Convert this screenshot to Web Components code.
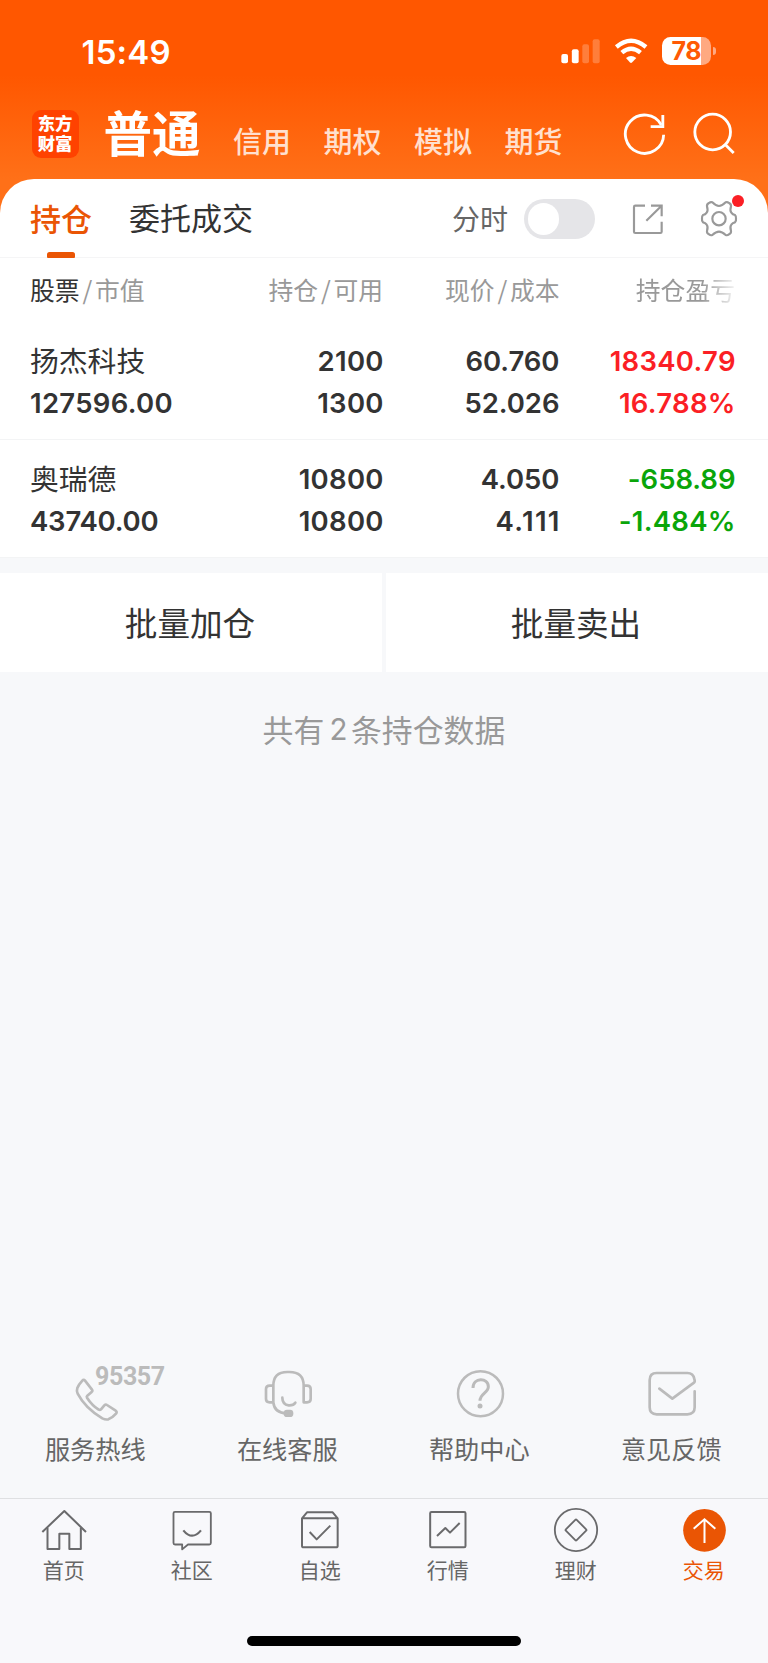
<!DOCTYPE html>
<html lang="zh-CN">
<head>
<meta charset="utf-8">
<title>持仓</title>
<style>
html, body { margin: 0; padding: 0; }
body { width: 768px; height: 1663px; overflow: hidden; background: #f7f8fa; font-family: Inter, "Noto Sans CJK SC", sans-serif; }
</style>
</head>
<body>
<trade-app></trade-app>
<script>
const CJK = '"Noto Sans CJK SC", sans-serif';

function define(name, render) {
  customElements.define(name, class extends HTMLElement {
    constructor() {
      super();
      this.attachShadow({ mode: 'open' });
    }
    connectedCallback() {
      const t = document.createElement('template');
      t.innerHTML = render(this);
      this.shadowRoot.replaceChildren(t.content.cloneNode(true));
    }
  });
}

/* name: [viewBox, width, height, markup] */
const ICONS = {
  signal: ['532 116 118 75', 39.33, 25, '<g fill="#fff"><rect x="533" y="161" width="20" height="28" rx="6"/><rect x="564.500" y="147" width="20.500" height="42" rx="6"/><g opacity=".23"><rect x="596" y="132" width="20" height="57" rx="6"/><rect x="627" y="117" width="21" height="72" rx="6"/></g></g>'],
  wifi: ['690 114 102 77', 34, 25.67, '<g fill="none" stroke="#fff" stroke-width="13"><path d="M697 141Q741 104 786 141"/><path d="M713.500 158Q741 134 769.500 158"/></g><path fill="#fff" d="M726 174Q741 162 757 174L744 187.500Q741 190 738 187.500Z"/>'],
  refresh: ['716 336 130 132', 43.33, 44, '<g fill="none" stroke="#fff" stroke-width="8.500"><path d="M838 404A57.500 57.500 0 1 1 831 375"/><path d="M835.500 345V380H799"/></g>'],
  search: ['922 336 132 132', 44, 44, '<g fill="none" stroke="#fff" stroke-width="8.500"><circle cx="984" cy="396" r="53.500"/><path d="M1020 432L1047 459"/></g>'],
  share: ['744 608 96 96', 32, 32, '<g fill="none" stroke="#999" stroke-width="6.500"><path d="M783 616H754Q750 616 750 620V694Q750 698 754 698H829Q833 698 833 694V664"/><path d="M801 616H833V648M832 617L787 661"/></g>'],
  gear: ['944 598 120 120', 40, 40, '<g fill="none" stroke="#999" stroke-width="6.500" stroke-linejoin="round"><circle cx="1004" cy="657" r="20"/><path d="M974 610Q979 606 984 608Q995 619 1004 619Q1013 619 1024 608Q1029 606 1034 610Q1041 613 1040 620Q1036 633 1041 639Q1045 645 1052 646Q1056 650 1055 657Q1056 664 1052 668Q1045 669 1041 675Q1036 681 1040 694Q1041 701 1034 704Q1029 708 1024 706Q1013 696 1004 696Q995 696 984 706Q979 708 974 704Q967 701 968 694Q972 681 967 675Q963 669 956 668Q952 664 953 657Q952 650 956 646Q963 645 967 639Q972 633 968 620Q967 613 974 610Z"/></g>'],
  phone: ['198 40 180 180', 60, 60, '<path fill="none" stroke="#bbb" stroke-width="8" stroke-linejoin="round" d="M247 93Q251 88 255 93L276 120Q279 124 275 127L262 138Q259 141 261 144Q276 167 296 180Q300 182 303 179L313 167Q317 163 321 166L347 183Q352 187 348 192Q337 205 325 209Q317 211 307 206Q256 176 233 132Q229 124 232 115Q236 105 247 93Z"/>'],
  headset: ['774 40 180 180', 60, 60, '<g fill="none" stroke="#bbb" stroke-width="8" stroke-linejoin="round"><path d="M820 158V108Q820 67 862 67H868Q911 67 911 108V158H921Q932 158 932 148V118Q932 108 921 108H911M820 108H809Q798 108 798 118V148Q798 158 809 158H820Q823 190 860 191"/><path stroke-linecap="round" d="M847 144Q847 164 866 167Q880 168 886 159"/></g><rect x="851" y="180" width="29" height="22" rx="10" fill="#bbb"/>'],
  help: ['198 40 180 180', 60, 60, '<circle cx="289.500" cy="132" r="67.500" fill="none" stroke="#bbb" stroke-width="7.500"/><path fill="none" stroke="#bbb" stroke-width="9" d="M267 115C267 82 313 83 313 111C313 129 288 132 288 153"/><circle cx="288" cy="169" r="7.500" fill="#bbb"/>'],
  feedback: ['774 40 180 180', 60, 60, '<path fill="none" stroke="#bbb" stroke-width="8" stroke-linecap="round" stroke-linejoin="round" d="M826 117L865 147L930 99Q934 96 931 88Q928 70 910 70H818Q797 70 797 91V173Q797 194 818 194H910Q932 194 932 173V125"/>'],
  home: ['120 468 144 144', 48, 48, '<g fill="none" stroke="#6a6a6c" stroke-width="6" stroke-linejoin="round"><path d="M127 546L193 483L258 546"/><path d="M142.500 533V597H178V551H208V597H242.500V533"/></g>'],
  community: ['504 468 144 144', 48, 48, '<g fill="none" stroke="#6a6a6c" stroke-width="5.500" stroke-linejoin="round"><path d="M525 485.500H628Q632.500 485.500 632.500 490V579Q632.500 583.500 628 583.500H564L546.500 598V583.500H525Q520.500 583.500 520.500 579V490Q520.500 485.500 525 485.500Z"/><path stroke-width="6.500" d="M550 541Q576 573 603 541"/></g>'],
  watch: ['888 468 144 144', 48, 48, '<g fill="none" stroke="#6a6a6c" stroke-width="6" stroke-linejoin="round"><path d="M906 505L921 487H998L1013 505V588Q1013 592 1008 592H911Q906 592 906 588ZM906 505H1013"/><path d="M929 546L950 568L991 527"/></g>'],
  market: ['120 468 144 144', 48, 48, '<g fill="none" stroke="#6a6a6c" stroke-width="6" stroke-linejoin="round"><rect x="138.500" y="486" width="106" height="106" rx="4"/><path d="M159 558L184 534L198 548L227 519"/></g>'],
  wealth: ['504 468 144 144', 48, 48, '<g fill="none" stroke="#6a6a6c" stroke-width="5.500" stroke-linejoin="round"><circle cx="576" cy="540" r="63.500"/><rect x="-23" y="-23" width="46" height="46" rx="3" transform="translate(576 540) rotate(45)"/></g>'],
  trade: ['888 468 144 144', 48, 48, '<circle cx="961.500" cy="541" r="64" fill="#ea5504"/><path fill="none" stroke="#fff" stroke-width="6" d="M961.500 579V509M929 536L961.500 508L994 536"/>']
};

define('ui-icon', el => {
  const [box, w, h, body] = ICONS[el.getAttribute('name')];
  return `<style>:host{display:block;flex:none;width:${w}px;height:${h}px}svg{display:block}</style>
  <svg width="${w}" height="${h}" viewBox="${box}">${body}</svg>`;
});

define('status-bar', () => `
<style>
:host{display:flex;align-items:flex-start;height:90px;box-sizing:border-box;padding:37px 52px 0 81.500px;color:#fff}
.time{font:600 33px/28px Inter,sans-serif;letter-spacing:.2px;margin:.5px auto 0 0}
.sig{margin:1.670px 13.500px 0 0}
.wifi{margin:1px 14px 0 0}
.bat{width:49px;height:28px;border-radius:8.500px;background:linear-gradient(90deg,#fff 39px,#ffa981 39px);color:#ff5a03;font:700 25px/28px Inter,sans-serif;letter-spacing:-.4px;box-sizing:border-box;padding-left:9.500px}
.tip{width:3px;height:8px;border-radius:0 4px 4px 0;background:#ffa981;margin:10px 0 0 2px}
</style>
<div class="time">15:49</div>
<ui-icon class="sig" name="signal"></ui-icon>
<ui-icon class="wifi" name="wifi"></ui-icon>
<div class="bat">78</div><div class="tip"></div>`);

define('account-nav', () => `
<style>
:host{display:flex;align-items:flex-start;height:89px;box-sizing:border-box;padding:20px 32px 0 32px;color:#fff;font-family:${CJK}}
.logo{width:47px;height:47.500px;box-sizing:border-box;border-radius:9px;background:#ff4200;font-family:"Liberation Sans",${CJK};font-weight:900;font-size:17.400px;line-height:20px;text-align:center;padding:4px 1px 0 0;letter-spacing:-.2px}
.logo div{height:20px}
.on{font-weight:700;font-size:48.500px;line-height:48px;margin:-3px 0 0 24.500px;width:97px}
nav{display:flex;gap:32.500px;margin:9.500px auto 0 32.500px;font-weight:500;font-size:29px;line-height:40px;color:#ffe0cf;white-space:nowrap}
.r{margin:2px 25.330px 0 0}
.s{margin:2px 0 0 0}
</style>
<div class="logo"><div>东方</div><div>财富</div></div>
<div class="on">普通</div>
<nav><span>信用</span><span>期权</span><span>模拟</span><span>期货</span></nav>
<ui-icon class="r" name="refresh"></ui-icon><ui-icon class="s" name="search"></ui-icon>`);

define('position-tabs', () => `
<style>
:host{display:flex;height:79px;box-sizing:border-box;border-bottom:1.500px solid #f5f5f6;padding:0 29.330px 0 30px;font:400 31px/78px ${CJK};color:#333;border-radius:34px 34px 0 0;background:#fff;white-space:nowrap}
.on{color:#ea5504;font-weight:500;width:62px;display:flex;flex-direction:column;align-items:center;line-height:77px;height:79px}
.on span{height:73px}
.on i{width:27.500px;height:5.500px;border-radius:2.500px 2.500px 1px 1px;background:#ea5504}
.two{margin:0 auto 0 37px;line-height:76px}
.fs{font-size:28px;color:#666;margin-right:16px;line-height:78px}
.sw{width:70.500px;height:40px;border-radius:20px;background:#e5e5e8;margin:20px 37.500px 0 0}
.sw b{display:block;width:31.500px;height:31.500px;border-radius:50%;background:#fff;margin:4px 0 0 3.500px}
.sh{margin:23.670px 34.670px 0 0}
.gear{position:relative;margin-top:20.330px}
.gear b{position:absolute;left:33.500px;top:-4.500px;width:12px;height:12px;border-radius:50%;background:#fb1f25}
</style>
<div class="on"><span>持仓</span><i></i></div><div class="two">委托成交</div>
<div class="fs">分时</div><div class="sw"><b></b></div>
<ui-icon class="sh" name="share"></ui-icon>
<div class="gear"><ui-icon name="gear"></ui-icon><b></b></div>`);

define('column-heads', () => `
<style>
:host{display:grid;grid-template-columns:200px 153px 176.500px 175.500px;height:64px;padding-left:30px;box-sizing:border-box;font:400 24.800px/62px ${CJK};color:#999;background:#fff;white-space:nowrap}
div{text-align:right}
.f{text-align:left}
b{font-weight:400;color:#333}
s{text-decoration:none;padding:0 2.500px 0 3px;font-size:25px}
.fade{-webkit-mask-image:linear-gradient(90deg,#000 142px,transparent 180px);mask-image:linear-gradient(90deg,#000 142px,transparent 180px)}
</style>
<div class="f"><b>股票</b><s>/</s>市值</div><div>持仓<s>/</s>可用</div><div>现价<s>/</s>成本</div><div class="fade">持仓盈亏</div>`);

define('holding-row', el => {
  const a = n => el.getAttribute(n);
  /* Narrow "1" glyphs get extra tracking so that the columns keep an even rhythm. */
  const track = s => {
    const ones = s.split('1').length - 1;
    return ones > 2 ? 1.35 : ones ? .3 : s.length > 7 ? -.2 : -.05;
  };
  const cell = (n, cls = '') => {
    const t = track(a(n));
    return `<div class="${cls}" style="letter-spacing:${t}px;margin-right:${-t}px">${a(n)}</div>`;
  };
  return `
<style>
:host{display:grid;grid-template-columns:200px 153.500px 176px 176px;grid-template-rows:42.500px 42.500px;height:118px;padding:17.500px 0 0 30px;box-sizing:border-box;border-bottom:1.500px solid #f3f4f5;font:600 27.500px/43px Inter,sans-serif;color:#333;background:#fff;white-space:nowrap}
div{text-align:right}
.n{text-align:left;font:400 28.800px/40px ${CJK}}
.v{text-align:left}
.p{color:${a('tone') === 'up' ? '#fb1f25' : '#0aa50a'}}
</style>
<div class="n"><slot></slot></div>${cell('qty')}${cell('price')}${cell('gain', 'p')}
${cell('value', 'v')}${cell('free')}${cell('cost')}${cell('rate', 'p')}`;
});

define('batch-actions', () => `
<style>
:host{display:grid;grid-template-columns:1fr 1fr;gap:4px;margin-top:15px;height:99px;font:400 32.600px/97px ${CJK};color:#333;text-align:center}
div{background:#fff;padding-right:2px}
</style>
<div>批量加仓</div><div>批量卖出</div>`);

define('service-item', el => `
<style>
:host{display:flex;flex-direction:column;align-items:center;position:relative;font:400 25.200px/38px ${CJK};color:#666}
ui-icon{margin-bottom:6px}
.l{margin-right:1.500px}
.num{position:absolute;left:95px;top:-1px;font:700 25px/30px Roboto,sans-serif;letter-spacing:-.4px;color:#bbb}
</style>
<ui-icon name="${el.getAttribute('icon')}"></ui-icon><span class="l"><slot></slot></span>
${el.hasAttribute('number') ? `<span class="num">${el.getAttribute('number')}</span>` : ''}`);

define('tab-item', el => `
<style>
:host{display:flex;flex-direction:column;align-items:center;font:400 21px/32px ${CJK};color:${el.hasAttribute('active') ? '#ea5504' : '#666'}}
ui-icon{margin-bottom:-1.500px}
.l{margin-right:.5px}
</style>
<ui-icon name="${el.getAttribute('icon')}"></ui-icon><span class="l"><slot></slot></span>`);

define('trade-app', () => `
<style>
:host{display:flex;flex-direction:column;height:1663px;background:#f7f8fa}
header{background:linear-gradient(180deg,#ff5700 0,#ff5700 75px,#ff7018 179px);height:220px;flex:none}
main{margin-top:-41px;flex:1}
.sum{font:400 30.900px/46px ${CJK};color:#999;text-align:center;margin-top:34px;display:flex;justify-content:center}
.sum i{font:400 29.500px/46px Inter,sans-serif;margin:0 3.500px 0 5px}
.svc{display:grid;grid-template-columns:repeat(4,1fr);height:135px}
footer{height:165px;box-sizing:border-box;border-top:1px solid #dfe0e2;background:#f8f8fb}
.tabs{display:grid;grid-template-columns:repeat(6,1fr);padding-top:7px;height:130px;box-sizing:border-box}
.bar{width:274px;height:10px;border-radius:5px;background:#000;margin:7px auto 0}
</style>
<header><status-bar></status-bar><account-nav></account-nav></header>
<main>
<position-tabs></position-tabs>
<column-heads></column-heads>
<holding-row tone="up" value="127596.00" qty="2100" free="1300" price="60.760" cost="52.026" gain="18340.79" rate="16.788%">扬杰科技</holding-row>
<holding-row tone="down" value="43740.00" qty="10800" free="10800" price="4.050" cost="4.111" gain="-658.89" rate="-1.484%">奥瑞德</holding-row>
<batch-actions></batch-actions>
<div class="sum"><span>共有</span><i>2</i><span>条持仓数据</span></div>
</main>
<section class="svc">
<service-item icon="phone" number="95357">服务热线</service-item>
<service-item icon="headset">在线客服</service-item>
<service-item icon="help">帮助中心</service-item>
<service-item icon="feedback">意见反馈</service-item>
</section>
<footer>
<div class="tabs">
<tab-item icon="home">首页</tab-item>
<tab-item icon="community">社区</tab-item>
<tab-item icon="watch">自选</tab-item>
<tab-item icon="market">行情</tab-item>
<tab-item icon="wealth">理财</tab-item>
<tab-item icon="trade" active>交易</tab-item>
</div>
<div class="bar"></div>
</footer>`);
</script>
</body>
</html>
